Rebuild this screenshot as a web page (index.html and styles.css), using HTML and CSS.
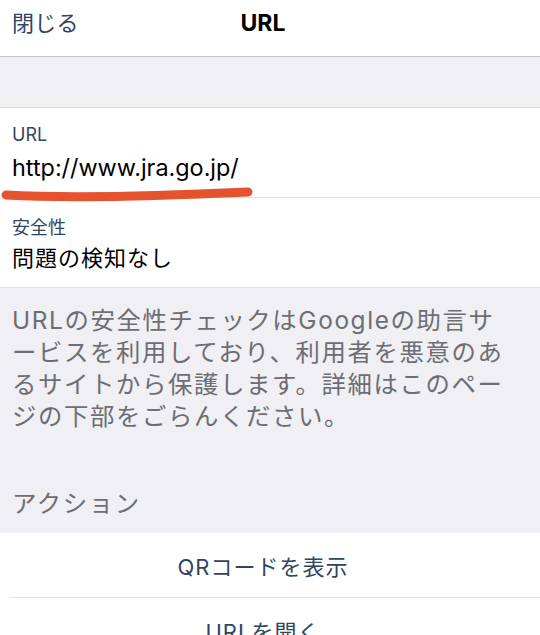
FILE: index.html
```html
<!DOCTYPE html>
<html lang="ja">
<head>
<meta charset="utf-8">
<title>URL</title>
<link rel="stylesheet" href="styles.css">
</head>
<body>
<div class="screen">
  <header class="navbar">
    <span class="nav-left">閉じる</span>
    <span class="nav-title">URL</span>
    <span class="nav-right"></span>
  </header>
  <div class="spacer"></div>
  <section class="group">
    <div class="row row-url">
      <div class="label">URL</div>
      <div class="value value-url">http://www.jra.go.jp/</div>
      <svg class="scribble" width="260" height="24" viewBox="0 0 260 24">
        <path d="M6 13 C 60 16, 140 15, 248 10" stroke="#e5522e" stroke-width="9" stroke-linecap="round" fill="none"/>
      </svg>
    </div>
    <div class="row row-safe">
      <div class="label">安全性</div>
      <div class="value value-jp">問題の検知なし</div>
    </div>
  </section>
  <section class="footer-note">
    <p class="note">URLの安全性チェックはGoogleの助言サービスを利用しており、利用者を悪意のあるサイトから保護します。詳細はこのページの下部をごらんください。</p>
    <div class="section-title">アクション</div>
  </section>
  <section class="actions">
    <div class="action">QRコードを表示</div>
    <div class="action">URLを開く</div>
  </section>
</div>
</body>
</html>
```
FILE: styles.css
```css
html, body {
  margin: 0;
  padding: 0;
  background: #ffffff;
}
body {
  font-family: "Inter", "Noto Sans CJK JP", sans-serif;
  -webkit-font-smoothing: antialiased;
}
.screen {
  width: 540px;
  height: 635px;
  overflow: hidden;
  background: #efeff4;
}
.navbar {
  display: grid;
  grid-template-columns: 1fr auto 1fr;
  align-items: center;
  height: 46px;
  padding: 0 12px 10px;
  background: #ffffff;
  border-bottom: 1px solid #c8c7cc;
}
.nav-left {
  font-size: 22px;
  line-height: 26px;
  color: #2f4562;
  letter-spacing: 0.3px;
}
.nav-title {
  font-size: 23px;
  line-height: 26px;
  font-weight: 700;
  color: #000000;
  padding-right: 14px;
}
.spacer {
  height: 50px;
  border-bottom: 1px solid #dcdce0;
}
.group {
  background: #ffffff;
  border-bottom: 1px solid #e3e3e6;
}
.row {
  position: relative;
  padding-left: 12px;
  display: flex;
  flex-direction: column;
}
.row-url {
  padding-top: 15px;
  padding-bottom: 15px;
  gap: 6px;
}
.row-url::after {
  content: "";
  position: absolute;
  left: 12px;
  right: 0;
  bottom: 0;
  height: 1px;
  background: #e3e3e6;
}
.row-safe {
  padding-top: 18px;
  padding-bottom: 14px;
  gap: 3px;
}
.label {
  font-size: 18px;
  line-height: 24px;
  color: #2f4562;
}
.value {
  font-size: 22px;
  line-height: 30px;
  color: #000000;
}
.value-url {
  font-size: 23.4px;
}
.value-jp {
  letter-spacing: 1px;
}
.scribble {
  position: absolute;
  left: 0;
  top: 74px;
  z-index: 2;
}
.footer-note {
  padding: 16px 0 14px 12px;
}
.note {
  margin: 0;
  width: 505px;
  font-size: 24.4px;
  line-height: 32px;
  letter-spacing: 1.6px;
  color: #6d6d72;
  line-break: loose;
}
.section-title {
  margin-top: 55px;
  font-size: 24.4px;
  line-height: 32px;
  letter-spacing: 1.6px;
  color: #6d6d72;
}
.actions {
  background: #ffffff;
}
.action {
  height: 64px;
  display: flex;
  align-items: center;
  justify-content: center;
  font-size: 22px;
  letter-spacing: 1px;
  color: #2f4562;
  border-bottom: 1px solid #e3e3e6;
  margin-left: 10px;
  padding-right: 24px;
}
```
